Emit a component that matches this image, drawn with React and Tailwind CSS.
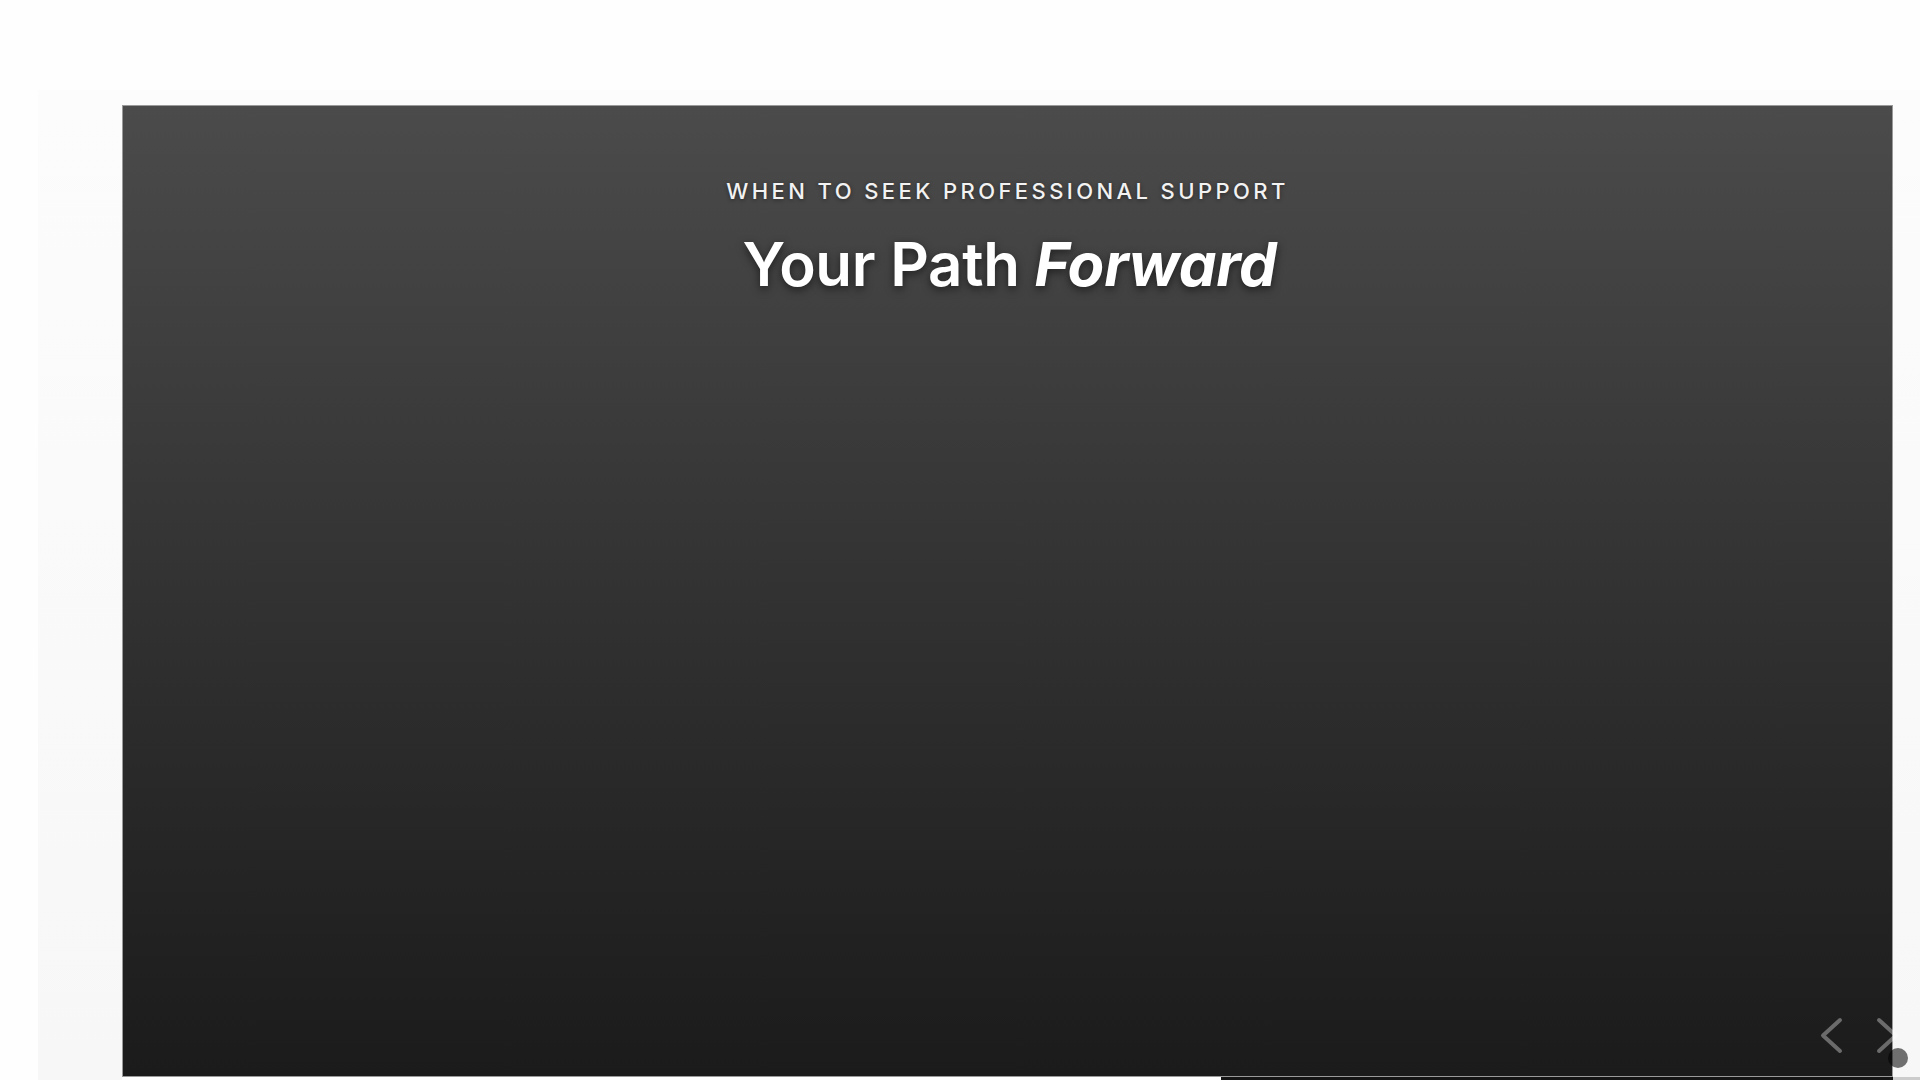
import React from 'react';

function Chevron({ dir }) {
    const points = dir === 'left' ? '21,4 4,19.5 21,35' : '3,4 20,19.5 3,35';
    return (
        <svg width="24" height="40" viewBox="0 0 24 40" fill="none">
            <polyline points={points} stroke="rgba(255,255,255,0.35)" strokeWidth="4" strokeLinecap="round" strokeLinejoin="round" />
        </svg>
    );
}

export default function App() {
    return (
        <div className="h-[1080px] overflow-hidden bg-[#fefefe] pt-[90px] pl-[38px] font-['Inter','Liberation_Sans',sans-serif]">
            <div className="h-full bg-gradient-to-b from-[#fcfcfc] to-[#f7f7f7] pt-[15px] pl-[84px] pr-[27px]">
                {/* slide */}
                <div className="relative h-[972px] border border-[#9a9a9a] bg-gradient-to-b from-[#4b4b4b] to-[#1b1b1b]">
                    <div className="flex flex-col items-center pt-[69px]">
                        <p className="text-[22px] leading-[33px] font-medium tracking-[0.155em] text-[#f2f2f2] uppercase [text-shadow:0_1px_4px_rgba(0,0,0,0.45)]">
                            When to seek professional support
                        </p>
                        <h1 className="mt-[20px] pl-[4px] text-[60px] leading-[72px] font-semibold tracking-[-0.005em] text-white [text-shadow:0_3px_8px_rgba(0,0,0,0.55)]">
                            Your Path <em className="font-bold italic">Forward</em>
                        </h1>
                    </div>

                    {/* controls */}
                    <button className="absolute right-[49px] bottom-[20px]">
                        <Chevron dir="left" />
                    </button>
                    <button className="absolute right-[-8px] bottom-[20px]">
                        <Chevron dir="right" />
                    </button>
                    <span className="absolute right-[-16px] bottom-[8px] h-5 w-5 rounded-full bg-black/55" />
                </div>
                {/* progress strip */}
                <div className="flex h-[3px] -mr-[27px]">
                    <div className="w-[1099px] bg-white" />
                    <div className="flex-1 bg-[#151515]" />
                    <div className="w-[27px] bg-[#cccccc]" />
                </div>
            </div>
        </div>
    );
}
